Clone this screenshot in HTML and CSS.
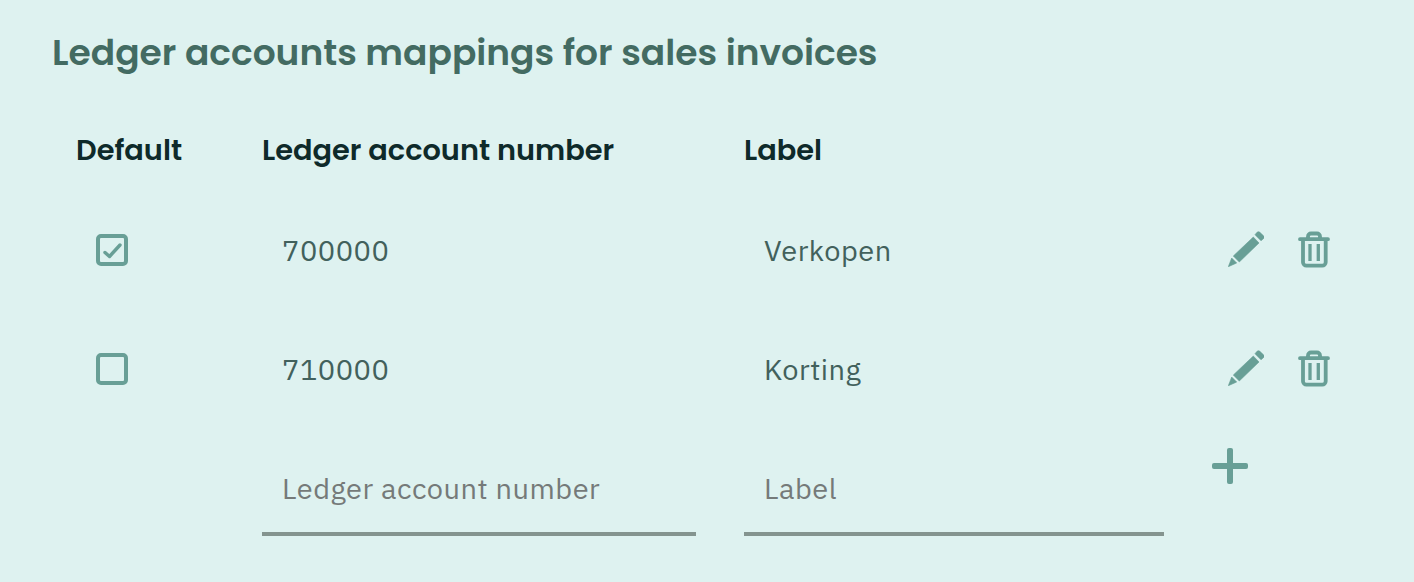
FILE: index.html
```html
<!DOCTYPE html>
<html lang="en">
<head>
<meta charset="utf-8">
<title>Ledger accounts mappings</title>
<link rel="stylesheet" href="styles.css">
</head>
<body>
<main class="panel">
  <h1 class="title">Ledger accounts mappings for sales invoices</h1>
  <div class="grid head">
    <div class="th th-default">Default</div>
    <div class="th">Ledger account number</div>
    <div class="th">Label</div>
    <div></div>
  </div>
  <div class="grid row">
    <div class="check-cell">
      <svg class="box" viewBox="0 0 32 32" width="32" height="32"><rect x="2" y="2" width="28" height="28" rx="3" fill="none" stroke="#689f96" stroke-width="4"/><path d="M9 18.500l4.500 4 10.500-11.500" fill="none" stroke="#689f96" stroke-width="3.400" stroke-linecap="round" stroke-linejoin="round"/></svg>
    </div>
    <div class="cell">700000</div>
    <div class="cell">Verkopen</div>
    <div class="actions">
      <svg class="ic-edit" viewBox="0 0 36 36" width="36" height="36"><path d="M0.300 35.700l3.400-8.700 5 5zM5.300 25L25.300 6l5.700 6-19.700 19zM27 3.700l2-2.400a2 2 0 0 1 2.600-.2l3.900 3.700a2 2 0 0 1 .2 2.600L33 9.800z" fill="#689f96" stroke="#689f96" stroke-width="0.600"/></svg>
      <svg class="ic-trash" viewBox="0 0 32 38" width="32" height="38"><path d="M2 8.200h28M10 8V5.500a3 3 0 0 1 3-3h6a3 3 0 0 1 3 3V8M5 8.200v23a3.500 3.500 0 0 0 3.500 3.500h15.700a3.500 3.500 0 0 0 3.500-3.500v-23" fill="none" stroke="#689f96" stroke-width="3.800" stroke-linecap="round"/><path d="M12 13v17M20.300 13v17" fill="none" stroke="#689f96" stroke-width="3.300"/></svg>
    </div>
  </div>
  <div class="grid row">
    <div class="check-cell">
      <svg class="box" viewBox="0 0 32 32" width="32" height="32"><rect x="2" y="2" width="28" height="28" rx="3" fill="none" stroke="#689f96" stroke-width="4"/></svg>
    </div>
    <div class="cell">710000</div>
    <div class="cell">Korting</div>
    <div class="actions">
      <svg class="ic-edit" viewBox="0 0 36 36" width="36" height="36"><path d="M0.300 35.700l3.400-8.700 5 5zM5.300 25L25.300 6l5.700 6-19.700 19zM27 3.700l2-2.400a2 2 0 0 1 2.600-.2l3.900 3.700a2 2 0 0 1 .2 2.600L33 9.800z" fill="#689f96" stroke="#689f96" stroke-width="0.600"/></svg>
      <svg class="ic-trash" viewBox="0 0 32 38" width="32" height="38"><path d="M2 8.200h28M10 8V5.500a3 3 0 0 1 3-3h6a3 3 0 0 1 3 3V8M5 8.200v23a3.500 3.500 0 0 0 3.500 3.500h15.700a3.500 3.500 0 0 0 3.500-3.500v-23" fill="none" stroke="#689f96" stroke-width="3.800" stroke-linecap="round"/><path d="M12 13v17M20.300 13v17" fill="none" stroke="#689f96" stroke-width="3.300"/></svg>
    </div>
  </div>
  <div class="grid add">
    <div></div>
    <div class="field field-number">Ledger account number</div>
    <div class="field field-label">Label</div>
    <div class="add-cell">
      <svg viewBox="0 0 36 36" width="36" height="36"><rect x="15" y="0" width="6" height="36" rx="2" fill="#689f96"/><rect x="0" y="15" width="36" height="6" rx="2" fill="#689f96"/></svg>
    </div>
  </div>
</main>
</body>
</html>
```
FILE: styles.css
```css
* { box-sizing: border-box; }
html, body { margin: 0; padding: 0; }
body {
  width: 1414px;
  height: 582px;
  overflow: hidden;
  background: #def2f0;
  font-family: "IBM Plex Sans", "Open Sans", "Noto Sans", sans-serif;
}
.panel { padding: 30px 0 0 52px; }
.title {
  margin: 0;
  height: 46px;
  font-family: "Poppins", "Inter", "Open Sans", sans-serif;
  font-weight: 600;
  font-size: 36px;
  line-height: 46px;
  color: #436b62;
  white-space: nowrap;
}
.grid {
  display: grid;
  grid-template-columns: 210px 482px 464px 1fr;
}
.head { margin-top: 54px; height: 60px; }
.th {
  font-family: "Poppins", "Inter", "Open Sans", sans-serif;
  font-weight: 600;
  font-size: 28.8px;
  line-height: 40px;
  color: #0e2a2a;
  white-space: nowrap;
}
.th-default { padding-left: 24px; }
.row { height: 119px; align-items: center; }
.check-cell { padding-left: 44px; display: flex; }
.cell {
  padding-left: 20px;
  font-size: 29px;
  line-height: 40px;
  color: #42615c;
  letter-spacing: 0.5px;
}
.actions { display: flex; align-items: center; gap: 34px; padding-left: 20px; }
.ic-edit { margin-bottom: 2px; }
.add { height: 120px; }
.field {
  height: 108px;
  padding: 40px 0 0 20px;
  font-size: 29px;
  line-height: 40px;
  color: #757a79;
  letter-spacing: 0.5px;
  border-bottom: 4px solid #84948f;
  white-space: nowrap;
}
.field-number { width: 434px; }
.field-label { width: 420px; }
.add-cell { padding-left: 4px; margin-top: 20px; }
```
